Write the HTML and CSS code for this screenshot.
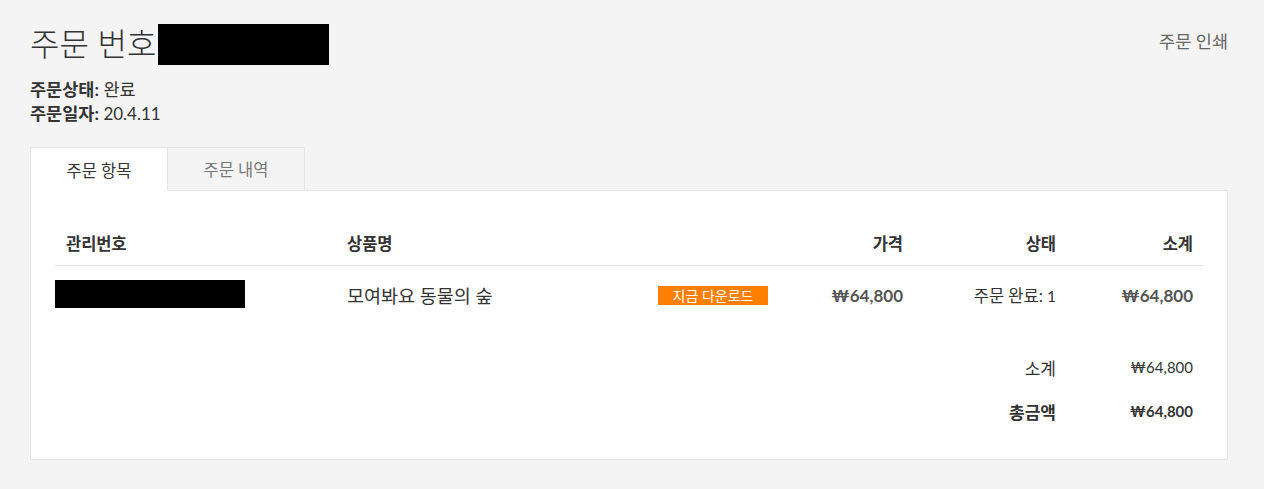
FILE: index.html
```html
<!DOCTYPE html>
<html lang="ko">
<head>
<meta charset="utf-8">
<title>주문 번호</title>
<link rel="stylesheet" href="styles.css">
</head>
<body>
<div class="page">
  <div class="top">
    <h1 class="title">주문 번호<span class="redact redact-title"></span></h1>
    <a class="print">주문 인쇄</a>
  </div>
  <div class="meta">
    <div><b>주문상태:</b> 완료</div>
    <div><b>주문일자:</b> <span class="num">20.4.11</span></div>
  </div>
  <div class="tabs">
    <div class="tab active">주문 항목</div>
    <div class="tab">주문 내역</div>
  </div>
  <div class="panel">
    <div class="grid head">
      <div class="c c1">관리번호</div>
      <div class="c c2">상품명</div>
      <div class="c c3"></div>
      <div class="c c4 r">가격</div>
      <div class="c c5 r">상태</div>
      <div class="c c6 r">소계</div>
    </div>
    <div class="grid row">
      <div class="c c1 nopad"><span class="redact redact-id"></span></div>
      <div class="c c2 name">모여봐요 동물의 숲</div>
      <div class="c c3"><span class="badge">지금 다운로드</span></div>
      <div class="c c4 r price">₩64,800</div>
      <div class="c c5 r status">주문 완료: <span class="num">1</span></div>
      <div class="c c6 r price">₩64,800</div>
    </div>
    <div class="grid sum first">
      <div class="c c5 r slabel">소계</div>
      <div class="c c6 r sval">₩64,800</div>
    </div>
    <div class="grid sum total">
      <div class="c c5 r slabel">총금액</div>
      <div class="c c6 r sval">₩64,800</div>
    </div>
  </div>
</div>
</body>
</html>
```
FILE: styles.css
```css
* { box-sizing: border-box; }
html, body { margin: 0; padding: 0; }
body {
  background: #f4f4f4;
  font-family: "Lato", "Noto Sans CJK KR", sans-serif;
  color: #333;
}
.page { padding: 20px 36px 0 30px; }
.top { display: flex; justify-content: space-between; align-items: flex-start; }
.title {
  margin: 0;
  font-size: 32px;
  font-weight: 300;
  line-height: 48px;
  display: flex;
  align-items: center;
  color: #333;
}
.redact { display: inline-block; background: #000; }
.redact-title { width: 171px; height: 41px; margin-left: 2px; margin-top: 0; }
.print {
  font-size: 17.5px;
  color: #666;
  line-height: 24px;
  margin-top: 10px;
}
.meta { margin-top: 10px; font-size: 17.5px; line-height: 24px; color: #333; }
.meta b { font-weight: 700; }
.meta .num { font-size: 17px; }
.tabs { display: flex; margin-top: 21px; }
.tab {
  width: 137px;
  height: 43px;
  display: flex;
  align-items: center;
  justify-content: center;
  font-size: 16.5px;
  color: #777;
  background: #f4f4f4;
  border: 1px solid #e6e6e6;
  border-bottom: none;
}
.tab + .tab { border-left: 1px solid #e6e6e6; width: 138px; }
.tab.active { background: #fff; color: #333; border-right: none; position: relative; z-index: 1; margin-bottom: -1px; height: 44px; }
.panel {
  background: #fff;
  border: 1px solid #e6e6e6;
  padding: 30px 24px 0 24px;
  height: 270px;
  width: 1198px;
}
.grid {
  display: grid;
  grid-template-columns: 282px 311px 130px 135px 153px 137px;
  align-items: center;
}
.c { padding: 0 10px; }
.r { text-align: right; }
.head { height: 45px; border-bottom: 1px solid #e6e6e6; font-size: 16.5px; font-weight: 700; color: #333; }
.head .c1 { padding-left: 11px; }
.row { height: 58px; }
.nopad { padding: 0; display: flex; }
.redact-id { width: 190px; height: 28px; margin-top: -2px; }
.name { font-size: 18.5px; color: #333; }
.badge {
  display: inline-block;
  background: #ff8000;
  color: #fff;
  font-size: 14px;
  line-height: 19px;
  height: 19px;
  width: 110px;
  text-align: center;
}
.price { font-size: 17px; font-weight: 700; color: #555; }
.status { font-size: 16.5px; color: #333; }
.status .num { font-size: 15.5px; }
.sum { height: 44px; font-size: 15px; color: #333; }
.sum.first { margin-top: 21px; }
.sum .slabel { grid-column: 5; font-size: 17px; }
.sum .sval { grid-column: 6; }
.total { font-weight: 700; }
```
